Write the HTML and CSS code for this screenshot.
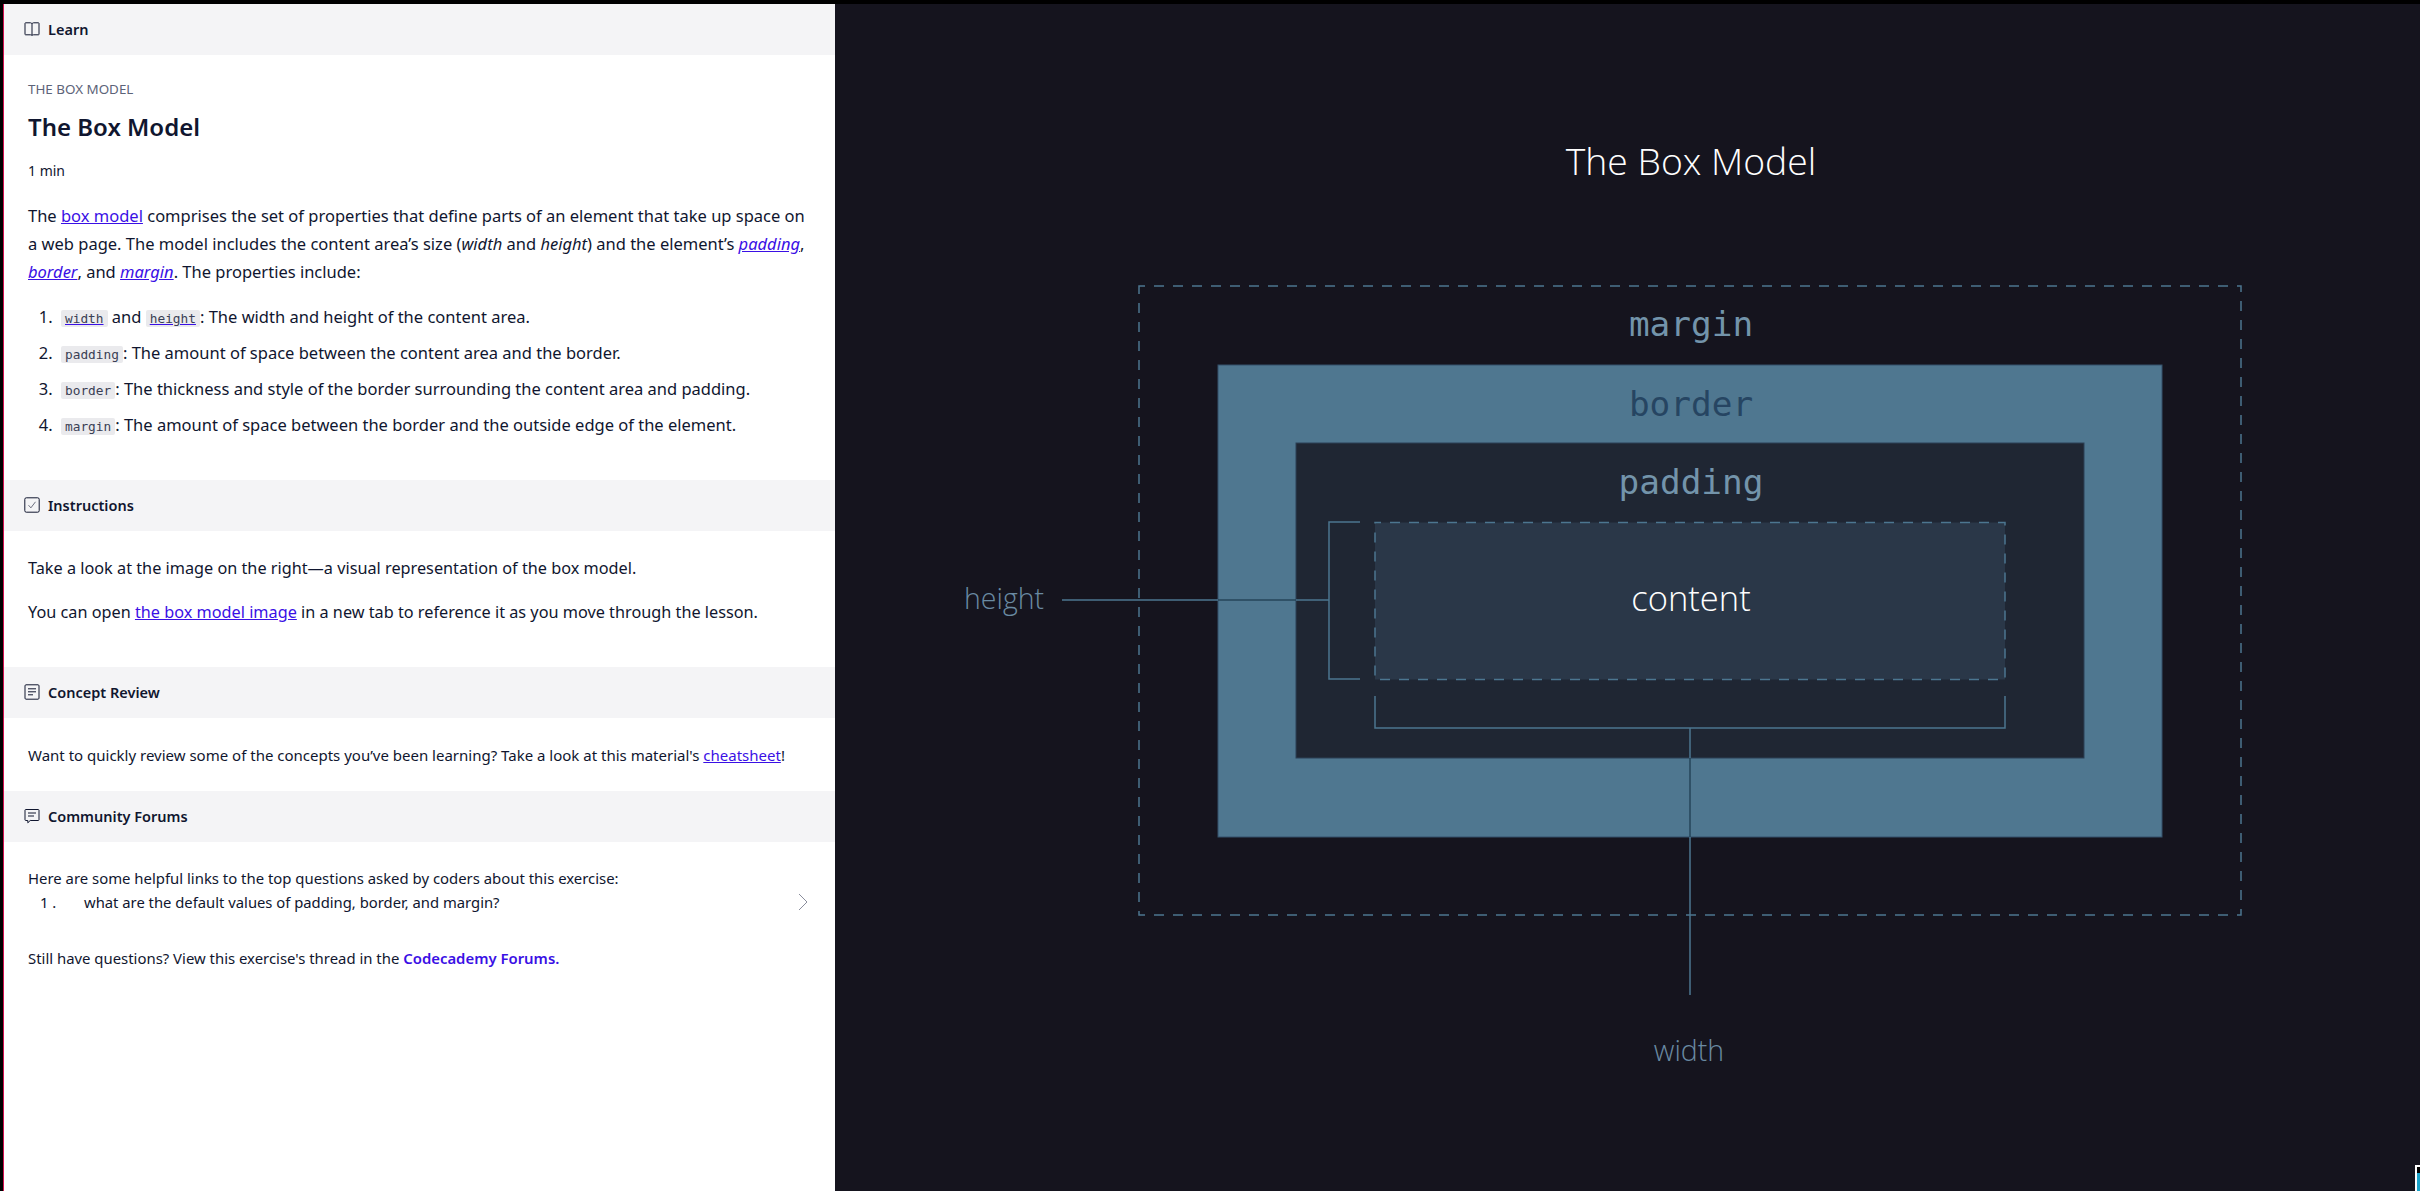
FILE: index.html
```html
<!DOCTYPE html>
<html lang="en">
  <head>
    <meta charset="UTF-8" />
    <title>The Box Model</title>
    <link rel="stylesheet" href="styles.css">
  </head>
  <body>
    <div class="page">
      <div class="lesson">
        <h3 class="section-head">
          <svg class="icon" viewBox="0 0 16 16"><path d="M1.5 1.8h5c.8 0 1.5.5 1.5 1.3 0-.8.7-1.3 1.5-1.3h5c.3 0 .5.2.5.5v11c0 .3-.2.5-.5.5H9.800c-.9 0-1.800.2-1.800.6 0-.4-.9-.6-1.800-.6H1.500c-.3 0-.5-.2-.5-.5v-11c0-.3.2-.5.5-.5zM8 3.100v11.300"/></svg>
          Learn
        </h3>
        <div class="learn-body">
          <div class="eyebrow">The Box Model</div>
          <h1 class="title">The Box Model</h1>
          <div class="meta">1 min</div>
          <p class="text">The <a href="#">box model</a> comprises the set of properties that define parts of an element that take up space on a web page. The model includes the content area’s size (<em>width</em> and <em>height</em>) and the element’s <a href="#"><em>padding</em></a>, <a href="#"><em>border</em></a>, and <a href="#"><em>margin</em></a>. The properties include:</p>
          <ol class="props">
            <li><a href="#" class="code-link"><code>width</code></a> and <a href="#" class="code-link"><code>height</code></a>: The width and height of the content area.</li>
            <li><code>padding</code>: The amount of space between the content area and the border.</li>
            <li><code>border</code>: The thickness and style of the border surrounding the content area and padding.</li>
            <li><code>margin</code>: The amount of space between the border and the outside edge of the element.</li>
          </ol>
        </div>

        <h3 class="section-head">
          <svg class="icon" viewBox="0 0 16 16"><rect x="0.800" y="0.800" width="14.400" height="14.400" rx="1.500"/><path class="thin" d="M4.500 8.200l2.400 2.600 4.600-6"/></svg>
          Instructions
        </h3>
        <div class="instructions-body">
          <p class="text">Take a look at the image on the right—a visual representation of the box model.</p>
          <p class="text">You can open <a href="#">the box model image</a> in a new tab to reference it as you move through the lesson.</p>
        </div>

        <h3 class="section-head">
          <svg class="icon" viewBox="0 0 16 16"><path d="M2 .8h12c.6 0 1 .4 1 1v12.400c0 .6-.4 1-1 1H2c-.6 0-1-.4-1-1V1.800c0-.6.4-1 1-1zM4 4.800h8M4 7.800h8M4 10.800h5"/></svg>
          Concept Review
        </h3>
        <div class="concept-body">
          <p class="small">Want to quickly review some of the concepts you’ve been learning? Take a look at this material's <a href="#">cheatsheet</a>!</p>
        </div>

        <h3 class="section-head">
          <svg class="icon" viewBox="0 0 16 16"><path d="M1.600 1.500h12.800c.3 0 .6.3.6.6v9.800c0 .3-.3.6-.6.6H6.200l-2.400 2.300v-2.300H1.600c-.3 0-.6-.3-.6-.6V2.100c0-.3.3-.6.6-.6zM4 5h8M4 8h6"/></svg>
          Community Forums
        </h3>
        <div class="forums-body">
          <p class="small">Here are some helpful links to the top questions asked by coders about this exercise:</p>
          <div class="forum-row">
            <span class="forum-num">1 .</span>
            <span class="forum-q">what are the default values of padding, border, and margin?</span>
            <svg class="chevron" viewBox="0 0 10 18"><path d="M1 1l8 8-8 8"/></svg>
          </div>
          <p class="small still">Still have questions? View this exercise's thread in the <a href="#" class="forum-link">Codecademy Forums.</a></p>
        </div>
      </div>

      <div class="stage">
        <svg class="diagram" viewBox="835 4 1585 1187">
          <text class="heading" x="1691" y="175">The Box Model</text>

          <rect class="margin-box" x="1139" y="286" width="1102" height="629"/>
          <rect class="border-box" x="1218" y="365" width="944" height="472"/>
          <rect class="padding-box" x="1296" y="443" width="788" height="315"/>
          <rect class="content-box" x="1375" y="522.500" width="630" height="157"/>

          <path class="guide" d="M1062 600H1218M1296 600H1329M1360 522H1329V679H1360M1375 696V728H2005V696M1690 728V758M1690 837V995"/>
          <path class="guide-dark" d="M1218 600H1296M1690 758V837"/>

          <text class="mono label-light" x="1691" y="336">margin</text>
          <text class="mono label-dark" x="1691" y="416">border</text>
          <text class="mono label-light" x="1691" y="494">padding</text>
          <text class="content-label" x="1691" y="611">content</text>
          <text class="side-label" x="1004" y="609">height</text>
          <text class="side-label" x="1689" y="1061">width</text>
        </svg>
        <div class="corner-widget"></div>
      </div>
    </div>
  </body>
</html>
```

FILE: styles.css
```css
* {
  box-sizing: border-box;
}

body {
  margin: 0;
  padding-top: 4px;
  height: 1191px;
  overflow: hidden;
  background: #000;
  font-family: "Noto Sans", Arial, sans-serif;
  color: #10162f;
}

.page {
  display: flex;
  height: 100%;
}

.lesson {
  width: 832px;
  margin-left: 3px;
  border-left: 1px solid #d1104f;
  background: #fff;
}

.section-head {
  display: flex;
  align-items: center;
  gap: 8px;
  height: 51px;
  margin: 0;
  padding-left: 20px;
  padding-bottom: 1px;
  background: #f4f4f6;
  font-size: 14.5px;
  font-weight: 600;
}

.icon {
  width: 16px;
  height: 16px;
  fill: none;
  stroke: #10162f;
  stroke-width: 1;
}

.icon .thin {
  stroke-width: 0.6;
}

a {
  color: #3a10e5;
}

.learn-body {
  padding: 24px 24px 37px;
}

.eyebrow {
  font-size: 13.4px;
  line-height: 20px;
  text-transform: uppercase;
  color: #5c6378;
}

.title {
  margin: 12px 0 0;
  font-size: 24px;
  line-height: 32px;
  font-weight: 600;
}

.meta {
  margin-top: 18px;
  font-size: 14px;
  line-height: 20px;
}

.text {
  margin: 0;
  font-size: 16.25px;
  line-height: 28px;
}

.learn-body .text {
  margin-top: 21px;
  font-size: 16.5px;
}

.props {
  margin: 13px 0 0;
  padding-left: 29px;
  font-size: 16.5px;
  line-height: 36px;
}

.props li {
  height: 36px;
  padding-left: 4px;
}

code {
  display: inline-block;
  padding: 1px 4px;
  border-radius: 2px;
  background: #eaeaed;
  font-family: "DejaVu Sans Mono", monospace;
  font-size: 12.8px;
  line-height: 15px;
  color: #3a3f55;
}

.code-link {
  text-decoration-color: #3a10e5;
}

.code-link code {
  text-decoration: underline;
  text-decoration-color: #3a10e5;
}

.instructions-body {
  padding: 23px 24px 41px;
}

.instructions-body .text + .text {
  margin-top: 16px;
}

.small {
  margin: 0;
  font-size: 15px;
  line-height: 24px;
}

.concept-body {
  padding: 25px 24px 24px;
}

.forums-body {
  padding: 24px 24px;
}

.forums-body .small {
  font-size: 14.9px;
}

.forum-row {
  display: flex;
  align-items: center;
  height: 24px;
  font-size: 14.8px;
}

.forum-num {
  width: 56px;
  padding-left: 12px;
}

.forum-q {
  flex: 1;
}

.chevron {
  width: 10px;
  height: 18px;
  margin-right: 3px;
  fill: none;
  stroke: #8a8d9c;
  stroke-width: 1;
}

.forums-body .still {
  margin-top: 32px;
}

.forum-link {
  font-weight: 600;
  text-decoration: none;
}

.stage {
  position: relative;
  flex: 1;
  background: #15141e;
}

.diagram {
  display: block;
  width: 100%;
  height: 100%;
  font-family: "Open Sans", sans-serif;
  font-weight: 300;
  text-anchor: middle;
}

.margin-box {
  fill: none;
  stroke: #4c7690;
  stroke-width: 1.500;
  stroke-dasharray: 10 9;
  stroke-dashoffset: 4;
}

.border-box {
  fill: #4f7790;
  stroke: #34506a;
  stroke-width: 1;
}

.padding-box {
  fill: #1f2633;
  stroke: #2c4056;
  stroke-width: 1;
}

.content-box {
  fill: #2a3748;
  stroke: #4c7690;
  stroke-width: 1.500;
  stroke-dasharray: 10 9;
  stroke-dashoffset: 4;
}

.guide {
  fill: none;
  stroke: #4c7690;
  stroke-width: 1.500;
}

.guide-dark {
  fill: none;
  stroke: #264559;
  stroke-width: 1.500;
}

.heading {
  font-size: 37.300px;
  fill: #fff;
}

.mono {
  font-family: "DejaVu Sans Mono", monospace;
  font-weight: 400;
  font-size: 34.400px;
}

.label-light {
  fill: #7394ab;
}

.label-dark {
  fill: #264562;
}

.content-label {
  font-size: 34.500px;
  fill: #fff;
}

.side-label {
  font-size: 28.500px;
  fill: #6a8aa2;
}

.corner-widget {
  position: absolute;
  right: 0;
  bottom: 0;
  width: 5px;
  height: 26px;
  border-top: 2px solid #fff;
  border-left: 2px solid #fff;
  background: linear-gradient(#000 6px, #1aa3c9 6px);
}
```
